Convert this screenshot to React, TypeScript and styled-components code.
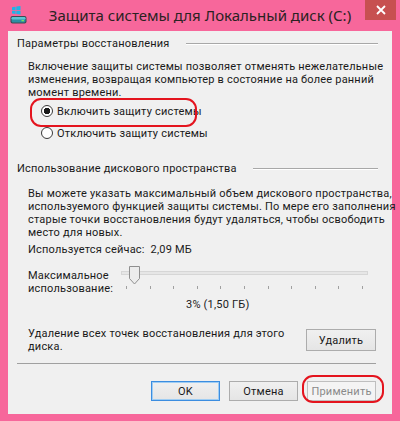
import React from "react";
import styled, { createGlobalStyle } from "styled-components";

const GlobalStyle = createGlobalStyle`
  html, body {
    margin: 0;
    padding: 0;
  }
  body {
    width: 400px;
    height: 421px;
    overflow: hidden;
    font-family: Roboto, "Liberation Sans", sans-serif;
  }
  * {
    box-sizing: border-box;
  }
`;

export default function App() {
  const sliderValue = 3;

  return (
    <>
      <GlobalStyle />
      <Frame>
        <TitleBar>
          <AppIcon />
          <Title>Защита системы для Локальный диск (С:)</Title>
          <CloseButton aria-label="Закрыть">
            <svg width="10" height="10" viewBox="0 0 10 10">
              <path d="M1 1 L9 9 M9 1 L1 9" stroke="#fff" strokeWidth="1.8" />
            </svg>
          </CloseButton>
        </TitleBar>

        <Client>
          <GroupHeader>
            <span>Параметры восстановления</span>
            <GroupLine />
          </GroupHeader>
          <Paragraph $top={9.5}>
            Включение защиты системы позволяет отменять нежелательные
            <br />
            изменения, возвращая компьютер в состояние на более ранний
            <br />
            момент времени.
          </Paragraph>
          <RadioRow $top={1.5} $highlighted>
            <RadioCircle $checked />
            Включить защиту системы
          </RadioRow>
          <RadioRow>
            <RadioCircle />
            Отключить защиту системы
          </RadioRow>

          <GroupHeader $top={17.5}>
            <span>Использование дискового пространства</span>
            <GroupLine />
          </GroupHeader>
          <Paragraph $top={12}>
            Вы можете указать максимальный объем дискового пространства,
            <br />
            используемого функцией защиты системы. По мере его заполнения
            <br />
            старые точки восстановления будут удаляться, чтобы освободить
            <br />
            место для новых.
          </Paragraph>
          <Paragraph $top={4}>Используется сейчас:&nbsp;&nbsp;2,09 МБ</Paragraph>

          <SliderRow>
            <SliderLabel>
              Максимальное
              <br />
              использование:
            </SliderLabel>
            <SliderArea>
              <SliderTrack />
              <Ticks>
                {Array.from({ length: 11 }).map((_, i) => (
                  <Tick key={i} />
                ))}
              </Ticks>
              <SliderThumb style={{ left: `${1 + (sliderValue / 100) * 236}px` }}>
                <svg width="11" height="19" viewBox="0 0 11 19">
                  <path
                    d="M0.5 0.5 H10.5 V12.5 L5.5 18 L0.5 12.5 Z"
                    fill="#ececec"
                    stroke="#8f8f8f"
                  />
                </svg>
              </SliderThumb>
            </SliderArea>
          </SliderRow>
          <ValueLabel>3% (1,50 ГБ)</ValueLabel>

          <DeleteRow>
            <Paragraph $top={0}>
              Удаление всех точек восстановления для этого
              <br />
              диска.
            </Paragraph>
            <Button $w={70} $h={22} $mt={2.5}>
              Удалить
            </Button>
          </DeleteRow>

          <Separator />

          <ButtonBar>
            <Button $default>OK</Button>
            <Button>Отмена</Button>
            <Button $highlighted disabled>
              Применить
            </Button>
          </ButtonBar>
        </Client>
      </Frame>
    </>
  );
}

function AppIcon() {
  return (
    <IconBox>
      <svg width="17" height="20" viewBox="0 0 17 20">
        <path d="M2 2.2 L5.6 1.7 V5 H2 Z" fill="#1fb4e6" />
        <path d="M6.3 1.6 L10.5 1 V5 H6.3 Z" fill="#1fb4e6" />
        <path d="M2 5.7 H5.6 V9 L2 8.5 Z" fill="#1fb4e6" />
        <path d="M6.3 5.7 H10.5 V9.6 L6.3 9.1 Z" fill="#1fb4e6" />
        <rect x="0.5" y="11" width="16" height="7.5" rx="2" fill="#3d4a52" />
        <rect x="1.5" y="12" width="14" height="5.5" rx="1.5" fill="#2a8fa3" />
        <rect x="1.5" y="12" width="14" height="2.5" rx="1.2" fill="#5fc3d2" />
        <rect x="11.5" y="15" width="2.5" height="1.3" fill="#7ee05a" />
      </svg>
    </IconBox>
  );
}

const Frame = styled.div`
  width: 400px;
  height: 421px;
  background: #f7679b;
  display: flex;
  flex-direction: column;
  color: #1a1a1a;
  font-size: 11px;
  letter-spacing: 0.2px;
`;

const TitleBar = styled.div`
  height: 31px;
  display: grid;
  grid-template-columns: 1fr auto 1fr;
  align-items: center;
`;

const IconBox = styled.div`
  justify-self: start;
  align-self: start;
  margin: 5px 0 0 10px;
  width: 17px;
  height: 20px;
`;

const Title = styled.div`
  font-family: "Noto Sans", sans-serif;
  font-size: 15px;
  letter-spacing: 0;
  color: #2a2222;
  white-space: nowrap;
  line-height: 20px;
  margin-top: -1px;
`;

const CloseButton = styled.button`
  justify-self: end;
  align-self: start;
  margin-right: 4px;
  width: 31px;
  height: 20px;
  border: none;
  padding: 0;
  background: #c75050;
  display: flex;
  align-items: center;
  justify-content: center;
`;

const Client = styled.div`
  flex: 1;
  margin: 0 8px 7px;
  background: #f0f0f0;
  padding: 6px 16px 0 9px;
  display: flex;
  flex-direction: column;
`;

const GroupHeader = styled.div<{ $top?: number }>`
  display: flex;
  align-items: center;
  height: 13px;
  line-height: 13px;
  margin-top: ${(p) => p.$top ?? 0}px;
  margin-right: -2px;
  white-space: nowrap;
`;

const GroupLine = styled.div`
  flex: 1;
  height: 1px;
  margin-left: 16px;
  background: #a8a8a8;
  box-shadow: 0 1px 0 #ffffff;
`;

const Paragraph = styled.div<{ $top: number }>`
  margin-top: ${(p) => p.$top}px;
  margin-left: 11px;
  line-height: 13px;
  white-space: nowrap;
`;

const RadioRow = styled.label<{ $top?: number; $highlighted?: boolean }>`
  position: relative;
  display: flex;
  align-items: center;
  height: 22px;
  margin-top: ${(p) => p.$top ?? 0}px;
  margin-left: 24px;
  white-space: nowrap;

  &::before {
    content: "";
    display: ${(p) => (p.$highlighted ? "block" : "none")};
    position: absolute;
    left: -11px;
    top: -2px;
    width: 163px;
    height: 25px;
    border: 2px solid #e4141e;
    border-radius: 11px;
  }
`;

const RadioCircle = styled.span<{ $checked?: boolean }>`
  width: 12px;
  height: 12px;
  border-radius: 50%;
  border: 1px solid #3a3a3a;
  background: ${(p) =>
    p.$checked
      ? "radial-gradient(circle, #1a1a1a 0 3px, #ffffff 3.5px)"
      : "#ffffff"};
  margin-right: 4px;
  flex-shrink: 0;
`;

const SliderRow = styled.div`
  display: flex;
  align-items: flex-start;
  margin-top: 13px;
  margin-left: 11px;
`;

const SliderLabel = styled.div`
  width: 93px;
  line-height: 13px;
  white-space: nowrap;
`;

const SliderArea = styled.div`
  position: relative;
  width: 247px;
  height: 26px;
  margin-top: -3px;
`;

const SliderTrack = styled.div`
  margin-top: 5px;
  height: 4px;
  background: #e6e6e6;
  border: 1px solid #d6d6d6;
`;

const Ticks = styled.div`
  display: flex;
  justify-content: space-between;
  margin-top: 11px;
  padding: 0 5px;
`;

const Tick = styled.span`
  width: 1px;
  height: 3px;
  background: #a0a0a0;
`;

const SliderThumb = styled.div`
  position: absolute;
  top: 0;
  width: 11px;
  height: 19px;
  line-height: 0;
`;

const ValueLabel = styled.div`
  margin-top: 3px;
  margin-left: 169px;
  line-height: 13px;
`;

const DeleteRow = styled.div`
  display: flex;
  justify-content: space-between;
  align-items: flex-start;
  margin-top: 16px;
`;

const Separator = styled.div`
  height: 1px;
  margin-top: 10.5px;
  background: #a0a0a0;
`;

const ButtonBar = styled.div`
  display: flex;
  justify-content: flex-end;
  gap: 9px;
  margin-top: 17px;
`;

const Button = styled.button<{
  $w?: number;
  $h?: number;
  $mt?: number;
  $default?: boolean;
  $highlighted?: boolean;
}>`
  position: relative;
  width: ${(p) => p.$w ?? 69}px;
  height: ${(p) => p.$h ?? 20}px;
  margin-top: ${(p) => p.$mt ?? 0}px;
  padding: 0;
  font-family: inherit;
  font-size: 11px;
  letter-spacing: inherit;
  color: #1a1a1a;
  background: linear-gradient(#f0f0f0, #e5e5e5);
  border: 1px solid ${(p) => (p.$default ? "#3c8de0" : "#acacac")};
  box-shadow: ${(p) => (p.$default ? "inset 0 0 0 1px #9fcdf3" : "none")};

  &:disabled {
    color: #8a8a8a;
    background: #f4f4f4;
    border-color: #bfbfbf;
  }

  &::after {
    content: "";
    display: ${(p) => (p.$highlighted ? "block" : "none")};
    position: absolute;
    left: -6px;
    top: -7px;
    right: -9px;
    bottom: -3px;
    border: 2px solid #e4141e;
    border-radius: 11px;
  }
`;
